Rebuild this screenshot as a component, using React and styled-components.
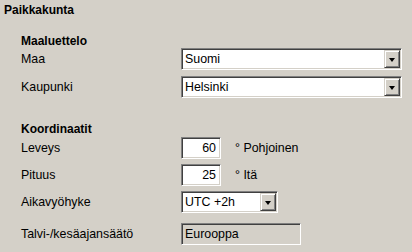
import React from "react";
import styled, { createGlobalStyle } from "styled-components";

const GlobalStyle = createGlobalStyle`
  html, body {
    margin: 0;
    padding: 0;
    background: #d4d0c8;
  }
`;

const Page = styled.div`
  width: 412px;
  height: 252px;
  box-sizing: border-box;
  padding: 3px 0 0 4px;
  background: #d4d0c8;
  font-family: "Liberation Sans", Arial, sans-serif;
  font-size: 12.4px;
  color: #000;
  overflow: hidden;
`;

const Title = styled.div`
  font-weight: 700;
  font-size: 12px;
  line-height: 14px;
  height: 14px;
`;

const Section = styled.div`
  display: flex;
  flex-direction: column;
  padding-left: 17px;
  margin-top: ${(p) => p.$top}px;
`;

const Heading = styled.div`
  font-weight: 700;
  font-size: 12px;
  line-height: 14px;
  height: 14px;
`;

const Row = styled.div`
  display: grid;
  grid-template-columns: 160px auto;
  align-items: center;
  height: 22px;
  margin-top: ${(p) => p.$gap || 0}px;
`;

const Label = styled.div`
  line-height: 14px;
`;

const Controls = styled.div`
  display: flex;
  align-items: center;
`;

const Field = styled.div`
  box-sizing: border-box;
  width: ${(p) => p.$w}px;
  height: 22px;
  display: flex;
  align-items: center;
  justify-content: ${(p) => (p.$right ? "flex-end" : "flex-start")};
  padding: ${(p) => (p.$right ? "0 4px 0 0" : "0 0 0 3px")};
  background: ${(p) => (p.$disabled ? "#d4d0c8" : "#fff")};
  border-top: 1px solid #808080;
  border-left: 1px solid #808080;
  border-bottom: 1px solid #fff;
  border-right: 1px solid #fff;
  box-shadow: inset 1px 1px 0 #404040, inset -1px -1px 0 #d4d0c8;
  line-height: 14px;
`;

const SelectText = styled.span`
  flex: 1;
`;

const DropButton = styled.div`
  box-sizing: border-box;
  width: 16px;
  height: 18px;
  margin-right: 1px;
  background: #d4d0c8;
  border-top: 1px solid #d4d0c8;
  border-left: 1px solid #d4d0c8;
  border-bottom: 1px solid #404040;
  border-right: 1px solid #404040;
  box-shadow: inset 1px 1px 0 #fff, inset -1px -1px 0 #808080;
  display: flex;
  align-items: center;
  justify-content: center;
`;

const Arrow = styled.div`
  width: 0;
  height: 0;
  border-left: 3.5px solid transparent;
  border-right: 3.5px solid transparent;
  border-top: 4px solid #000;
  margin-top: 1px;
`;

const Unit = styled.span`
  margin-left: 14px;
  line-height: 14px;
`;

const Select = ({ w, value }) => (
  <Field $w={w}>
    <SelectText>{value}</SelectText>
    <DropButton>
      <Arrow />
    </DropButton>
  </Field>
);

const App = () => {
  return (
    <>
      <GlobalStyle />
      <Page>
        <Title>Paikkakunta</Title>

        <Section $top={17}>
          <Heading>Maaluettelo</Heading>
          <Row>
            <Label>Maa</Label>
            <Controls>
              <Select w={221} value="Suomi" />
            </Controls>
          </Row>
          <Row $gap={6}>
            <Label>Kaupunki</Label>
            <Controls>
              <Select w={221} value="Helsinki" />
            </Controls>
          </Row>
        </Section>

        <Section $top={24}>
          <Heading>Koordinaatit</Heading>
          <Row $gap={1}>
            <Label>Leveys</Label>
            <Controls>
              <Field $w={40} $right>60</Field>
              <Unit>° Pohjoinen</Unit>
            </Controls>
          </Row>
          <Row $gap={5}>
            <Label>Pituus</Label>
            <Controls>
              <Field $w={40} $right>25</Field>
              <Unit>° Itä</Unit>
            </Controls>
          </Row>
          <Row $gap={5}>
            <Label>Aikavyöhyke</Label>
            <Controls>
              <Select w={97} value="UTC +2h" />
            </Controls>
          </Row>
          <Row $gap={10}>
            <Label>Talvi-/kesäajansäätö</Label>
            <Controls>
              <Field $w={120} $disabled>Eurooppa</Field>
            </Controls>
          </Row>
        </Section>
      </Page>
    </>
  );
};

export default App;
